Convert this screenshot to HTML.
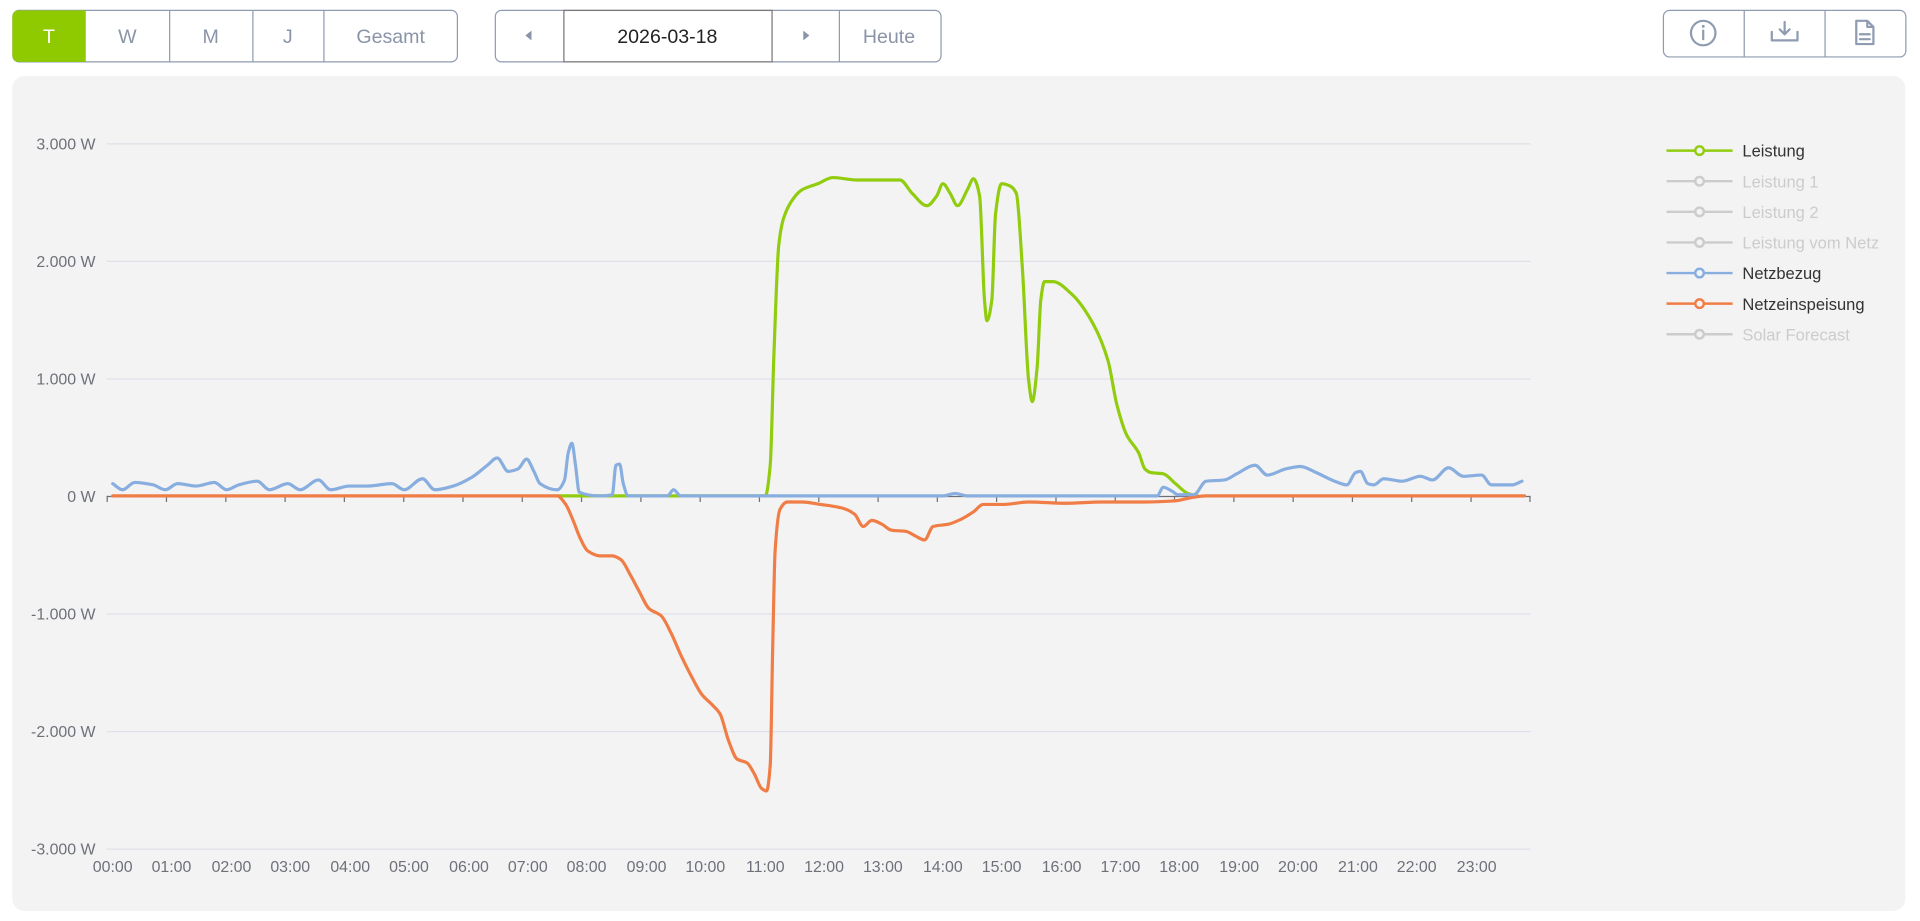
<!DOCTYPE html>
<html><head><meta charset="utf-8"><style>
html,body{margin:0;padding:0;background:#fff;width:1920px;height:921px;overflow:hidden}
svg{display:block}
text{font-family:"Liberation Sans",sans-serif}
</style></head><body>
<svg width="1920" height="921" viewBox="0 0 1568 752.2" xmlns="http://www.w3.org/2000/svg">
<rect x="10.5" y="8.5" width="363" height="42" rx="5" fill="#fff" stroke="#8f9bb0"/>
<path d="M15 8.5 H70 V50.5 H15 a5 5 0 0 1 -5 -5 V13.5 a5 5 0 0 1 5 -5z" fill="#8fca00"/>
<g stroke="#8f9bb0"><line x1="138.5" y1="8.5" x2="138.5" y2="50.5"/><line x1="206.5" y1="8.5" x2="206.5" y2="50.5"/><line x1="264.5" y1="8.5" x2="264.5" y2="50.5"/></g>
<g font-size="16" text-anchor="middle" fill="#8a94a8">
<text x="40" y="35" fill="#fff">T</text><text x="104" y="35">W</text><text x="172" y="35">M</text><text x="235" y="35">J</text><text x="319" y="35">Gesamt</text></g>
<rect x="404.5" y="8.5" width="364" height="42" rx="5" fill="#fff" stroke="#8f9bb0"/>
<rect x="460.5" y="8.5" width="170" height="42" fill="#fff" stroke="#777"/>
<line x1="685.5" y1="8.5" x2="685.5" y2="50.5" stroke="#8f9bb0"/>
<path d="M434 25 L429 29 L434 33z" fill="#8a94a8"/><path d="M656 25 L661 29 L656 33z" fill="#8a94a8"/>
<text x="545" y="35" font-size="16" text-anchor="middle" fill="#222">2026-03-18</text>
<text x="726" y="35" font-size="16" text-anchor="middle" fill="#8a94a8">Heute</text>
<rect x="1358.5" y="8.5" width="198" height="38" rx="5" fill="#fff" stroke="#8f9bb0"/>
<g stroke="#8f9bb0"><line x1="1424.5" y1="8.5" x2="1424.5" y2="46.5"/><line x1="1490.5" y1="8.5" x2="1490.5" y2="46.5"/></g>
<g fill="none" stroke="#8f9bb0" stroke-width="1.8" stroke-linecap="round" stroke-linejoin="round">
<circle cx="1391" cy="27" r="10"/><line x1="1391" y1="25" x2="1391" y2="32"/>
<path d="M1447 26 V33 H1468 V26 M1457.5 18 V28 M1453.5 24 L1457.5 28 L1461.5 24"/>
<path d="M1516 17 H1525 L1530 22 V36 H1516z M1525 17 V22 H1530 M1519 28 H1527 M1519 32 H1527"/>
</g>
<circle cx="1391" cy="21.5" r="1.2" fill="#8f9bb0"/>
<rect x="10" y="62" width="1546" height="682" rx="10" fill="#f3f3f3"/>
<g stroke="#dfe1ea" stroke-width="1">
<line x1="87" y1="117.5" x2="1250" y2="117.5"/><line x1="87" y1="213.5" x2="1250" y2="213.5"/><line x1="87" y1="309.5" x2="1250" y2="309.5"/>
<line x1="87" y1="501.5" x2="1250" y2="501.5"/><line x1="87" y1="597.5" x2="1250" y2="597.5"/><line x1="87" y1="693.5" x2="1250" y2="693.5"/></g>
<line x1="87" y1="405.5" x2="1250" y2="405.5" stroke="#6e7079"/>
<g stroke="#6e7079">
<path d="M87.5 405V410 M135.9 405V410 M184.4 405V410 M232.8 405V410 M281.2 405V410 M329.7 405V410 M378.1 405V410 M426.5 405V410 M474.9 405V410 M523.4 405V410 M571.8 405V410 M620.2 405V410 M668.7 405V410 M717.1 405V410 M765.5 405V410 M813.9 405V410 M862.4 405V410 M910.8 405V410 M959.2 405V410 M1007.7 405V410 M1056.1 405V410 M1104.5 405V410 M1152.9 405V410 M1201.4 405V410 M1249.5 405V410"/></g>
<g font-size="13" fill="#6e7079" text-anchor="end">
<text x="78" y="122">3.000 W</text><text x="78" y="218">2.000 W</text><text x="78" y="314">1.000 W</text><text x="78" y="410">0 W</text>
<text x="78" y="506">-1.000 W</text><text x="78" y="602">-2.000 W</text><text x="78" y="698">-3.000 W</text></g>
<g font-size="13" fill="#6e7079" text-anchor="middle">
<text x="92" y="712">00:00</text><text x="140" y="712">01:00</text><text x="189" y="712">02:00</text><text x="237" y="712">03:00</text><text x="286" y="712">04:00</text><text x="334" y="712">05:00</text><text x="383" y="712">06:00</text><text x="431" y="712">07:00</text><text x="479" y="712">08:00</text><text x="528" y="712">09:00</text><text x="576" y="712">10:00</text><text x="625" y="712">11:00</text><text x="673" y="712">12:00</text><text x="721" y="712">13:00</text><text x="770" y="712">14:00</text><text x="818" y="712">15:00</text><text x="867" y="712">16:00</text><text x="915" y="712">17:00</text><text x="963" y="712">18:00</text><text x="1012" y="712">19:00</text><text x="1060" y="712">20:00</text><text x="1109" y="712">21:00</text><text x="1157" y="712">22:00</text><text x="1206" y="712">23:00</text></g>
<g fill="none" stroke-width="2.6" stroke-linejoin="round" stroke-linecap="round">
<polyline class="sm" stroke="#91cc0f" points="455,405 625,405 629,380 632,290 636,200 640,178 648,162 655,155 668,150 680,145 700,147 735,147 745,158 757,168 765,160 770,150 776,158 782,168 790,155 795,146 800,160 804,245 806,262 810,245 813,175 818,150 825,152 830,158 835,220 840,310 843,328 847,300 850,245 853,230 860,230 875,240 893,265 905,295 912,330 920,355 930,370 935,383 940,386 950,387 960,395 970,403 978,405"/>
<polyline class="sm" stroke="#f07c46" points="92,405 455,405 462,412 468,425 474,440 480,450 490,454 500,454 507,457 515,470 522,483 530,497 540,503 548,517 556,535 565,553 573,567 582,576 588,583 595,605 602,620 610,623 616,632 622,644 626,646 629,625 631,530 633,450 637,416 643,410 655,410 670,412 688,415 698,420 705,430 712,425 720,428 728,433 740,434 748,438 755,441 762,430 775,428 785,424 795,418 803,412 820,412 840,410 870,411 900,410 930,410 960,409 975,406 985,405 1245,405"/>
<polyline class="sm" stroke="#88aee0" points="92,395 100,400 110,394 125,396 135,400 145,395 160,397 175,394 185,400 195,396 210,393 220,400 235,395 245,400 260,392 270,400 285,397 300,397 320,395 330,400 345,391 355,400 370,397 385,390 398,380 406,374 415,385 423,383 430,375 436,385 441,395 455,400 461,392 464,370 467,362 470,380 473,402 490,405 500,404 503,380 506,379 509,395 513,405 545,405 550,400 556,405 770,405 780,403 790,405 945,405 950,398 957,401 962,404 975,404 985,393 1000,392 1010,387 1025,380 1035,388 1050,383 1062,381 1075,386 1090,393 1100,396 1107,386 1111,385 1117,395 1122,396 1130,391 1145,393 1160,389 1170,392 1183,382 1195,389 1210,388 1218,396 1235,396 1243,393"/>
</g>
<g stroke-width="2" fill="#f3f3f3">
<line x1="1361" y1="123" x2="1415" y2="123" stroke="#91cc0f"/><circle cx="1388" cy="123" r="3.5" stroke="#91cc0f"/>
<line x1="1361" y1="148" x2="1415" y2="148" stroke="#ccc"/><circle cx="1388" cy="148" r="3.5" stroke="#ccc"/>
<line x1="1361" y1="173" x2="1415" y2="173" stroke="#ccc"/><circle cx="1388" cy="173" r="3.5" stroke="#ccc"/>
<line x1="1361" y1="198" x2="1415" y2="198" stroke="#ccc"/><circle cx="1388" cy="198" r="3.5" stroke="#ccc"/>
<line x1="1361" y1="223" x2="1415" y2="223" stroke="#88aee0"/><circle cx="1388" cy="223" r="3.5" stroke="#88aee0"/>
<line x1="1361" y1="248" x2="1415" y2="248" stroke="#f07c46"/><circle cx="1388" cy="248" r="3.5" stroke="#f07c46"/>
<line x1="1361" y1="273" x2="1415" y2="273" stroke="#ccc"/><circle cx="1388" cy="273" r="3.5" stroke="#ccc"/>
</g>
<g font-size="13.5">
<text x="1423" y="128" fill="#333">Leistung</text>
<text x="1423" y="153" fill="#ccc">Leistung 1</text>
<text x="1423" y="178" fill="#ccc">Leistung 2</text>
<text x="1423" y="203" fill="#ccc">Leistung vom Netz</text>
<text x="1423" y="228" fill="#333">Netzbezug</text>
<text x="1423" y="253" fill="#333">Netzeinspeisung</text>
<text x="1423" y="278" fill="#ccc">Solar Forecast</text>
</g>
</svg>
<script>
document.querySelectorAll('polyline.sm').forEach(function(pl){
  var p=pl.getAttribute('points').trim().split(/\s+/).map(function(s){var a=s.split(',');return [+a[0],+a[1]];});
  var n=p.length,d=[],m=[];
  for(var i=0;i<n-1;i++)d.push((p[i+1][1]-p[i][1])/(p[i+1][0]-p[i][0]));
  m[0]=d[0];m[n-1]=d[n-2];
  for(var i=1;i<n-1;i++){
    if(d[i-1]*d[i]<=0)m[i]=0;
    else{var h0=p[i][0]-p[i-1][0],h1=p[i+1][0]-p[i][0];
      var w1=2*h1+h0,w2=h1+2*h0;m[i]=(w1+w2)/(w1/d[i-1]+w2/d[i]);}
  }
  var s='M'+p[0][0]+' '+p[0][1];
  for(var i=0;i<n-1;i++){
    var h=(p[i+1][0]-p[i][0])/3;
    s+=' C'+(p[i][0]+h).toFixed(2)+' '+(p[i][1]+m[i]*h).toFixed(2)+' '+(p[i+1][0]-h).toFixed(2)+' '+(p[i+1][1]-m[i+1]*h).toFixed(2)+' '+p[i+1][0]+' '+p[i+1][1];
  }
  var path=document.createElementNS('http://www.w3.org/2000/svg','path');
  path.setAttribute('d',s);path.setAttribute('stroke',pl.getAttribute('stroke'));
  pl.parentNode.replaceChild(path,pl);
});
</script>
</body></html>
